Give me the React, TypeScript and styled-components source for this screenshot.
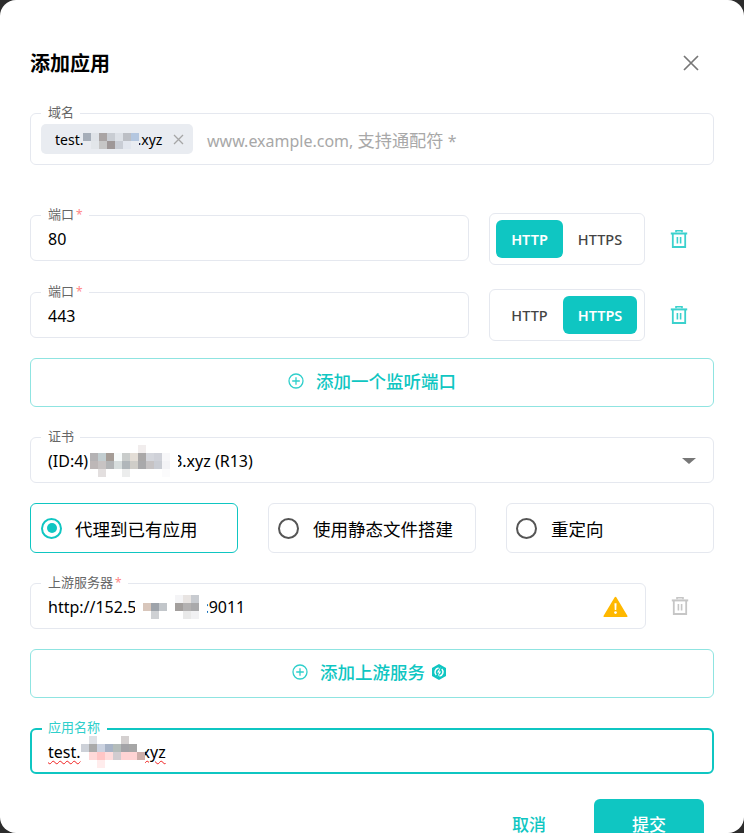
import React from "react";
import styled, { createGlobalStyle } from "styled-components";

const TEAL = "#0fc6c2";
const LINE = "#e5e8ef";

const GlobalStyle = createGlobalStyle`
  html, body {
    margin: 0;
    height: 100%;
    background: #2c2c2c;
    overflow: hidden;
  }
  body {
    font-family: "Noto Sans", "Noto Sans CJK SC", sans-serif;
    color: #000;
  }
`;

const Dialog = styled.div`
  box-sizing: border-box;
  width: 744px;
  height: 833px;
  padding: 0 30px;
  background: #fff;
  border-radius: 16px;
  overflow: hidden;
`;

const Header = styled.div`
  display: flex;
  align-items: center;
  justify-content: space-between;
  height: 113px;
  padding: 12px 15px 0 0;
  box-sizing: border-box;
`;

const Title = styled.h2`
  margin: 2px 0 0;
  font-size: 20px;
  font-weight: 700;
  line-height: 28px;
`;

const Field = styled.div<{ $focus?: boolean; $tall?: boolean; $lift?: boolean }>`
  position: relative;
  flex: 1;
  box-sizing: border-box;
  display: flex;
  align-items: center;
  height: ${(p) => (p.$tall ? 52 : 46)}px;
  padding: ${(p) => (p.$tall ? 0 : 2)}px ${(p) => (p.$focus ? 16 : 17)}px 0;
  margin-bottom: ${(p) => (p.$lift ? 2 : 0)}px;
  background: #fff;
  border: ${(p) => (p.$focus ? `2px solid ${TEAL}` : `1px solid ${LINE}`)};
  border-radius: 6px;
  font-size: 16px;
`;

const Label = styled.label<{ $focus?: boolean }>`
  position: absolute;
  top: ${(p) => (p.$focus ? -11 : -10)}px;
  left: 10px;
  padding: ${(p) => (p.$focus ? "0 7px 0 6px" : "0 6px 0 7px")};
  background: #fff;
  font-size: 13px;
  line-height: 16px;
  color: ${(p) => (p.$focus ? "#2fcfcb" : "#666")};

  i {
    font-style: normal;
    font-size: 12px;
    color: #f88;
    margin-left: 2px;
  }
`;

const Chip = styled.div`
  display: flex;
  align-items: center;
  height: 30px;
  width: 152px;
  box-sizing: border-box;
  margin-left: -7px;
  padding: 0 9px 0 14px;
  background: #e9ecf1;
  border-radius: 5px;
  font-size: 14px;
  flex: none;
`;

const ChipClose = styled.span`
  display: flex;
  margin-left: auto;
  color: #a6a6a6;
`;

const Placeholder = styled.span`
  margin-left: 14px;
  color: #a8a8a8;
  white-space: nowrap;
`;

const Han = styled.span`
  font-size: 17.2px;
`;

const Row = styled.div<{ $mt: number }>`
  display: flex;
  align-items: center;
  margin-top: ${(p) => p.$mt}px;
`;

const Toggle = styled.div`
  display: flex;
  flex: none;
  box-sizing: border-box;
  width: 156px;
  height: 52px;
  margin-left: 20px;
  padding: 6px 7px 6px 6px;
  border: 1px solid ${LINE};
  border-radius: 6px;
`;

const ToggleItem = styled.div<{ $on: boolean; $w: number }>`
  display: flex;
  align-items: center;
  justify-content: center;
  width: ${(p) => p.$w}px;
  border-radius: 6px;
  font-size: 14.5px;
  font-weight: ${(p) => (p.$on ? 600 : 500)};
  color: ${(p) => (p.$on ? "#fff" : "#444")};
  background: ${(p) => (p.$on ? TEAL : "transparent")};
`;

const TrashCell = styled.div<{ $off?: boolean }>`
  display: flex;
  flex: none;
  align-items: center;
  justify-content: center;
  width: 68px;
  margin-right: ${(p) => (p.$off ? 0 : 1)}px;
  color: ${(p) => (p.$off ? "#c6c6c6" : "#3bd1cd")};
`;

const AddButton = styled.div<{ $mt: number; $shift?: number }>`
  box-sizing: border-box;
  display: flex;
  align-items: center;
  justify-content: center;
  height: 49px;
  margin-top: ${(p) => p.$mt}px;
  padding: 0 ${(p) => p.$shift ?? 0}px 4px 0;
  border: 1px solid #8fe4e1;
  border-radius: 6px;
  color: ${TEAL};
  font-size: 17.5px;
  font-weight: 500;
  gap: 6px;

  svg:first-child {
    margin-right: 6px;
  }
`;

const Grow = styled.span`
  flex: 1;
`;

const Arrow = styled.span`
  width: 0;
  height: 0;
  border-left: 7px solid transparent;
  border-right: 7px solid transparent;
  border-top: 6px solid #777;
`;

const RadioRow = styled.div`
  display: grid;
  grid-template-columns: repeat(3, 208px);
  justify-content: space-between;
  margin-top: 20px;
`;

const RadioCard = styled.div<{ $on?: boolean }>`
  box-sizing: border-box;
  display: flex;
  align-items: center;
  gap: ${(p) => (p.$on ? 13 : 14)}px;
  height: 50px;
  padding-left: ${(p) => (p.$on ? 10 : 9)}px;
  border: 1px solid ${(p) => (p.$on ? TEAL : LINE)};
  border-radius: 6px;
  font-size: 17.5px;
`;

const RadioDot = styled.span<{ $on?: boolean }>`
  box-sizing: border-box;
  display: flex;
  align-items: center;
  justify-content: center;
  width: 21px;
  height: 21px;
  border: 2.5px solid ${(p) => (p.$on ? TEAL : "#555")};
  border-radius: 50%;

  &::after {
    content: "";
    display: ${(p) => (p.$on ? "block" : "none")};
    width: 10px;
    height: 10px;
    border-radius: 50%;
    background: ${TEAL};
  }
`;

const Squiggle = styled.span`
  text-decoration: underline wavy #f02020 1px;
  text-underline-offset: 2px;
`;

const Footer = styled.div`
  display: flex;
  align-items: flex-start;
  justify-content: flex-end;
  gap: 48px;
  margin-top: 25px;
  padding-right: 10px;
`;

const CancelText = styled.span`
  margin-top: 12px;
  color: ${TEAL};
  font-size: 17px;
  font-weight: 500;
`;

const SubmitButton = styled.div`
  display: flex;
  justify-content: center;
  width: 110px;
  height: 50px;
  padding-top: 12px;
  box-sizing: border-box;
  background: ${TEAL};
  border-radius: 6px;
  color: #fff;
  font-size: 17px;
  font-weight: 500;
`;

// the reference has its hostnames blurred out with a pixel mosaic
const MosaicGrid = styled.span<{ $cols: number; $left?: number; $right?: number; $top?: number }>`
  display: inline-grid;
  flex: none;
  z-index: 1;
  grid-template-columns: repeat(${(p) => p.$cols}, 8px);
  grid-auto-rows: 8px;
  margin-left: ${(p) => p.$left ?? 0}px;
  margin-right: ${(p) => p.$right ?? 0}px;
  margin-top: ${(p) => p.$top ?? 0}px;
`;

const MosaicCell = styled.span<{ $c: string }>`
  background: ${(p) => p.$c};
`;

function Mosaic({
  rows,
  left,
  right,
  top,
}: {
  rows: string[][];
  left?: number;
  right?: number;
  top?: number;
}) {
  return (
    <MosaicGrid $cols={rows[0].length} $left={left} $right={right} $top={top}>
      {rows.flat().map((c, i) => (
        <MosaicCell key={i} $c={c} />
      ))}
    </MosaicGrid>
  );
}

const chipCells = [
  ["#a6aeb9", "#dfe3e8", "#a9a4a4", "#c9cdd3", "#dde1e7", "#bcbfc5", "#b4c7e0"],
  ["#e9ecf1", "#e2e6ea", "#c6c6c6", "#9e9797", "#c9cdd5", "#e2e6ee", "#e9ecf1"],
];

const certCells = [
  ["#fff", "#fff", "#fff", "#fff", "#fff", "#fff", "#f1eded", "#fff", "#fff", "#fff", "#fff"],
  ["#b4b2b4", "#c2cdd0", "#a59c96", "#f6fafa", "#c9cccb", "#e3ddd6", "#aaa8a8", "#d4d6dc", "#cfd1d8", "#f7f7f9", "#fff"],
  ["#bdb7b7", "#c7c3c3", "#b2b4b6", "#d7dddd", "#b0b6ba", "#cfcdc8", "#a9a9ab", "#c6c3c4", "#c9ccd3", "#f3f3f6", "#fff"],
  ["#fff", "#e3dfdf", "#fff", "#fff", "#eceded", "#fff", "#fff", "#fff", "#fff", "#fbfbfc", "#fff"],
];

const upstreamCells = [
  ["#fff", "#fff", "#fff", "#fff", "#fff", "#f4f4f6", "#e8e4e2", "#c8cbd0", "#fff"],
  ["#fff", "#d8c6bb", "#9ea3aa", "#c2c6ca", "#fff", "#a39f9d", "#b3b1b1", "#a9a9ab", "#fff"],
  ["#fff", "#fff", "#cfd1d4", "#fff", "#fff", "#fff", "#e9e9e9", "#f1f1f3", "#fff"],
];

const nameCells = [
  ["#fff", "#dfe1e6", "#fff", "#fff", "#fff", "#d4d0d0", "#fff", "#fff"],
  ["#cdd1d8", "#aaaaaa", "#cbd2e0", "#a7b3c6", "#b4bcba", "#a3a3a7", "#a6a6a6", "#fff"],
  ["#fff", "#ffd9d9", "#ffc6c6", "#ffdcdc", "#d2ccd0", "#ffd4d4", "#ffd4d4", "#cdaea9"],
  ["#fff", "#fff", "#ffecec", "#fff", "#fff", "#fff", "#fff", "#fff"],
];

function TrashIcon() {
  return (
    <svg width="18" height="18" viewBox="0 0 18 18" fill="none" stroke="currentColor">
      <path d="M0.8 3.4H17.2" strokeWidth="2" />
      <path d="M6 2.2V0.8H12V2.2" strokeWidth="1.6" />
      <path d="M2.8 3.8V17H15.2V3.8" strokeWidth="1.8" />
      <path d="M7.4 7V13.6M10.6 7V13.6" strokeWidth="1.6" />
    </svg>
  );
}

function PlusCircleIcon() {
  return (
    <svg width="16" height="16" viewBox="0 0 16 16" fill="none" stroke="#2fcfcb" strokeWidth="1.3">
      <circle cx="8" cy="8" r="7" />
      <path d="M8 4.2V11.8M4.2 8H11.8" />
    </svg>
  );
}

function CloseIcon() {
  return (
    <svg width="16" height="16" viewBox="0 0 16 16" fill="none" stroke="#777" strokeWidth="1.7">
      <path d="M1 1L15 15M15 1L1 15" />
    </svg>
  );
}

function ChipCloseIcon() {
  return (
    <svg width="11" height="11" viewBox="0 0 11 11" fill="none" stroke="currentColor" strokeWidth="1.3">
      <path d="M1 1L10 10M10 1L1 10" />
    </svg>
  );
}

function WarningIcon() {
  return (
    <svg width="25" height="22" viewBox="0 0 26 22">
      <path
        d="M13 1.5L24.5 20.5H1.5Z"
        fill="#ffb800"
        stroke="#ffb800"
        strokeWidth="2"
        strokeLinejoin="round"
      />
      <path d="M11.9 7H14.1L13.8 14H12.2Z" fill="#fff" />
      <circle cx="13" cy="16.8" r="1.4" fill="#fff" />
    </svg>
  );
}

function ProBadge() {
  return (
    <svg width="16" height="16" viewBox="0 0 16 16">
      <path d="M8 0L15 4V12L8 16L1 12V4Z" fill={TEAL} />
      <path d="M5.2 11A4.2 4.2 0 0 1 7.6 3.9M10.8 5A4.2 4.2 0 0 1 8.4 12.1" fill="none" stroke="#fff" strokeWidth="1.5" />
      <path d="M9.6 3L6 8.6H8L6.6 13L10.2 7.4H8.2Z" fill="#fff" />
    </svg>
  );
}

function PortRow({
  port,
  scheme,
  mt,
  lift,
}: {
  port: string;
  scheme: "HTTP" | "HTTPS";
  mt: number;
  lift?: boolean;
}) {
  return (
    <Row $mt={mt}>
      <Field $lift={lift}>
        <Label>
          端口<i>*</i>
        </Label>
        {port}
      </Field>
      <Toggle>
        <ToggleItem $w={67} $on={scheme === "HTTP"}>
          HTTP
        </ToggleItem>
        <ToggleItem $w={74} $on={scheme === "HTTPS"}>
          HTTPS
        </ToggleItem>
      </Toggle>
      <TrashCell>
        <TrashIcon />
      </TrashCell>
    </Row>
  );
}

export default function App() {
  return (
    <>
      <GlobalStyle />
      <Dialog>
        <Header>
          <Title>添加应用</Title>
          <CloseIcon />
        </Header>

        <Field $tall>
          <Label>域名</Label>
          <Chip>
            test.
            <Mosaic rows={chipCells} top={3} right={-2} />
            .xyz
            <ChipClose>
              <ChipCloseIcon />
            </ChipClose>
          </Chip>
          <Placeholder>
            www.example.com, <Han>支持通配符</Han> *
          </Placeholder>
        </Field>

        <PortRow port="80" scheme="HTTP" mt={48} lift />
        <PortRow port="443" scheme="HTTPS" mt={24} />

        <AddButton $mt={17}>
          <PlusCircleIcon />
          添加一个监听端口
        </AddButton>

        <Row $mt={30}>
          <Field>
            <Label>证书</Label>
            (ID:4)
            <Mosaic rows={certCells} left={2} right={-5} />
            3.xyz (R13)
            <Grow />
            <Arrow />
          </Field>
        </Row>

        <RadioRow>
          <RadioCard $on>
            <RadioDot $on />
            代理到已有应用
          </RadioCard>
          <RadioCard>
            <RadioDot />
            使用静态文件搭建
          </RadioCard>
          <RadioCard>
            <RadioDot />
            重定向
          </RadioCard>
        </RadioRow>

        <Row $mt={30}>
          <Field>
            <Label>
              上游服务器<i>*</i>
            </Label>
            http://152.5
            <Mosaic rows={upstreamCells} left={-1} right={-3} />
            :9011
            <Grow />
            <WarningIcon />
          </Field>
          <TrashCell $off>
            <TrashIcon />
          </TrashCell>
        </Row>

        <AddButton $mt={20} $shift={5}>
          <PlusCircleIcon />
          添加上游服务
          <ProBadge />
        </AddButton>

        <Row $mt={30}>
          <Field $focus>
            <Label $focus>应用名称</Label>
            <Squiggle>test.</Squiggle>
            <Mosaic rows={nameCells} right={-3} />
            <Squiggle>xyz</Squiggle>
          </Field>
        </Row>

        <Footer>
          <CancelText>取消</CancelText>
          <SubmitButton>提交</SubmitButton>
        </Footer>
      </Dialog>
    </>
  );
}
